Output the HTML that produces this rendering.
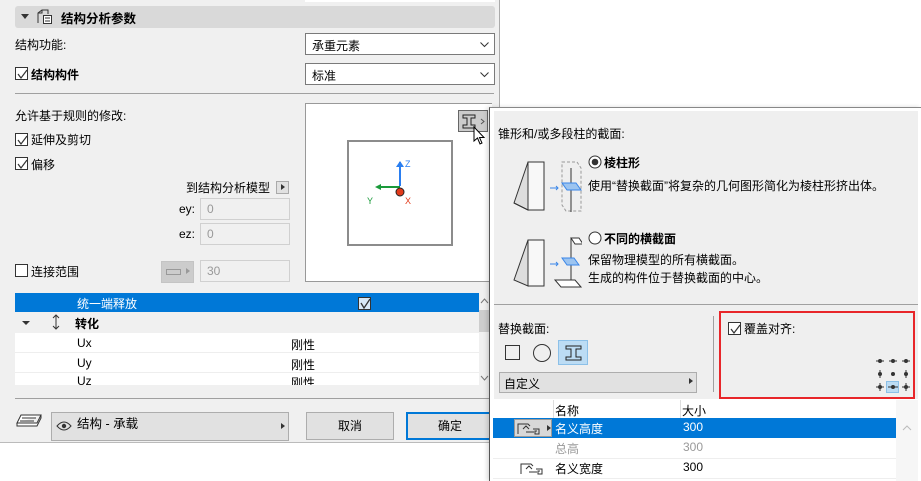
<!DOCTYPE html><html><head><meta charset="utf-8"><style>
*{box-sizing:border-box;margin:0;padding:0}
body{width:921px;height:481px;overflow:hidden;background:#fff;font-family:"Liberation Sans","Noto Sans CJK SC",sans-serif;font-size:12px;color:#000;position:relative}
.a{position:absolute}
.cb{position:absolute;width:13px;height:13px;border:1px solid #333;background:#fff}
.cb svg{position:absolute;left:1px;top:1px}
.sel{position:absolute;background:#fff;border:1px solid #7a7a7a;height:22px;padding:3px 6px;font-size:12px}
.inp{position:absolute;background:#f0f0f0;border:1px solid #d0d0d0;color:#999;padding:3px 6px;height:22px}
.btn{position:absolute;background:#e1e1e1;border:1px solid #adadad;text-align:center;line-height:26px;height:28px}
</style></head><body>
<div class="a" style="left:0;top:0;width:500px;height:443px;background:#f0f0f0;border-right:1px solid #aaa;border-bottom:1px solid #bbb"></div>
<div class="a" style="left:305px;top:0;width:190px;height:2px;background:#fff"></div>
<div class="a" style="left:15px;top:6px;width:480px;height:22px;background:#d9d9d9;border-radius:3px"></div>
<div class="a" style="left:21px;top:14px;border-left:4px solid transparent;border-right:4px solid transparent;border-top:5px solid #333"></div>
<svg class="a" style="left:36px;top:8px" width="18" height="17"><path d="M2 15V5l4-3h6v4M2 5h4V2" fill="none" stroke="#333"/><rect x="7.5" y="7.5" width="8" height="8" fill="#fff" stroke="#333"/><path d="M9 10h5M9 13h5" stroke="#333"/></svg>
<div class="a" style="left:61px;top:8px;font-weight:bold;font-size:12.5px">结构分析参数</div>
<div class="a" style="left:15px;top:36px">结构功能:</div>
<div class="sel" style="left:305px;top:33px;width:190px">承重元素<svg class="a" style="right:5px;top:8px" width="9" height="6"><path d="M0.5 0.5l4 4 4-4" fill="none" stroke="#333"/></svg></div>
<div class="cb" style="left:15px;top:67px"><svg width="11" height="11"><path d="M1 5l3 4 6-8" fill="none" stroke="#333" stroke-width="1.2"/></svg></div>
<div class="a" style="left:31px;top:66px;font-weight:bold">结构构件</div>
<div class="sel" style="left:305px;top:63px;width:190px">标准<svg class="a" style="right:5px;top:8px" width="9" height="6"><path d="M0.5 0.5l4 4 4-4" fill="none" stroke="#333"/></svg></div>
<div class="a" style="left:15px;top:93px;width:479px;height:1px;background:#a0a0a0"></div>
<div class="a" style="left:15px;top:107px">允许基于规则的修改:</div>
<div class="cb" style="left:15px;top:133px"><svg width="11" height="11"><path d="M1 5l3 4 6-8" fill="none" stroke="#333" stroke-width="1.2"/></svg></div>
<div class="a" style="left:31px;top:131px">延伸及剪切</div>
<div class="cb" style="left:15px;top:157px"><svg width="11" height="11"><path d="M1 5l3 4 6-8" fill="none" stroke="#333" stroke-width="1.2"/></svg></div>
<div class="a" style="left:31px;top:156px">偏移</div>
<div class="a" style="left:186px;top:179px">到结构分析模型</div>
<div class="a" style="left:276px;top:181px;width:13px;height:13px;border:1px solid #aaa;background:#e1e1e1"><div class="a" style="left:4px;top:2px;border-top:3.5px solid transparent;border-bottom:3.5px solid transparent;border-left:4px solid #333"></div></div>
<div class="a" style="left:179px;top:202px">ey:</div>
<div class="inp" style="left:200px;top:198px;width:90px">0</div>
<div class="a" style="left:179px;top:227px">ez:</div>
<div class="inp" style="left:200px;top:223px;width:90px">0</div>
<div class="cb" style="left:15px;top:264px"></div>
<div class="a" style="left:31px;top:263px">连接范围</div>
<div class="a" style="left:161px;top:261px;width:33px;height:22px;background:#ccc;border:1px solid #c4c4c4"><div class="a" style="left:4px;top:7px;width:15px;height:6px;border:1px solid #999"></div><div class="a" style="left:24px;top:6px;border-top:3.5px solid transparent;border-bottom:3.5px solid transparent;border-left:4px solid #999"></div></div>
<div class="inp" style="left:200px;top:260px;width:90px">30</div>
<div class="a" style="left:305px;top:103px;width:187px;height:179px;background:#fff;border:1px solid #999;border-right:none"></div>
<div class="a" style="left:347px;top:140px;width:106px;height:106px;border:2px solid #8c8c8c;background:#fff"></div>
<svg class="a" style="left:365px;top:158px" width="60" height="50"><path d="M35 4v24" stroke="#2a7ef0" stroke-width="2"/><path d="M31 9l4-6 4 6z" fill="#2a7ef0"/><path d="M35 29H13" stroke="#1a9a3a" stroke-width="2"/><path d="M10 29l6-3v6z" fill="#1a9a3a"/><circle cx="35" cy="34" r="4" fill="#e23a1a" stroke="#222" stroke-width="1"/><text x="40" y="9" font-size="9" fill="#2a7ef0" font-family="Liberation Sans">Z</text><text x="2" y="46" font-size="9" fill="#1a9a3a" font-family="Liberation Sans">Y</text><text x="40" y="46" font-size="9" fill="#e23a1a" font-family="Liberation Sans">X</text></svg>
<div class="a" style="left:458px;top:110px;width:30px;height:22px;background:#ccc;border:1px solid #666"><svg class="a" style="left:3px;top:3px" width="24" height="15"><path d="M1 1h12v3H9v7h4v3H1v-3h4V4H1z" fill="none" stroke="#222"/><path d="M19 5l3 2.5-3 2.5" fill="none" stroke="#555"/></svg></div>
<svg class="a" style="left:473px;top:126px" width="14" height="20"><path d="M1 1v14l3.5-3 2.5 6 2-1-2.5-5.5H11z" fill="#fff" stroke="#000"/></svg>
<div class="a" style="left:15px;top:293px;width:464px;height:92px;background:#fff"></div>
<div class="a" style="left:15px;top:293px;width:464px;height:19px;background:#0078d7"></div>
<div class="a" style="left:77px;top:295px;color:#fff">统一端释放</div>
<div class="a" style="left:358px;top:297px;width:13px;height:13px;border:1px solid #333;background:#d8e8f6"><svg class="a" style="left:1px;top:0" width="11" height="11"><path d="M1 5l3 5 6-9" fill="none" stroke="#333" stroke-width="1.3"/></svg></div>
<div class="a" style="left:15px;top:312px;width:464px;height:21px;background:#f0f0f0"></div>
<div class="a" style="left:22px;top:321px;border-left:4px solid transparent;border-right:4px solid transparent;border-top:4px solid #333"></div>
<svg class="a" style="left:52px;top:314px" width="8" height="16"><path d="M4 1v14M1 4l3-3 3 3M1 12l3 3 3-3" fill="none" stroke="#333"/></svg>
<div class="a" style="left:75px;top:315px;font-weight:bold">转化</div>
<div class="a" style="left:15px;top:352px;width:464px;height:1px;background:#eee"></div>
<div class="a" style="left:15px;top:372px;width:464px;height:1px;background:#eee"></div>
<div class="a" style="left:77px;top:336px">Ux</div><div class="a" style="left:291px;top:336px">刚性</div>
<div class="a" style="left:77px;top:356px">Uy</div><div class="a" style="left:291px;top:356px">刚性</div>
<div class="a" style="left:15px;top:373px;width:464px;height:12px;overflow:hidden"><div class="a" style="left:62px;top:1px">Uz</div><div class="a" style="left:276px;top:1px">刚性</div></div>
<div class="a" style="left:479px;top:310px;width:11px;height:22px;background:#cdcdcd"></div>
<svg class="a" style="left:480px;top:298px" width="9" height="6"><path d="M1 5l3.5-4 3.5 4" fill="none" stroke="#777"/></svg>
<svg class="a" style="left:480px;top:375px" width="9" height="6"><path d="M1 1l3.5 4 3.5-4" fill="none" stroke="#777"/></svg>
<div class="a" style="left:15px;top:398px;width:476px;height:1px;background:#a0a0a0"></div>
<svg class="a" style="left:16px;top:413px" width="28" height="16"><path d="M5 2h20l-4 8H1z M1 10v3h20l4-8v-3" fill="#fff" stroke="#333"/><path d="M6 5h14M4 8h14" stroke="#333"/></svg>
<div class="a" style="left:51px;top:412px;width:238px;height:29px;background:#e1e1e1;border:1px solid #adadad"></div>
<svg class="a" style="left:56px;top:421px" width="16" height="10"><path d="M1 5q7-8 14 0q-7 8-14 0z" fill="none" stroke="#333"/><circle cx="8" cy="5" r="2.2" fill="#333"/></svg>
<div class="a" style="left:77px;top:413px;font-size:12.5px">结构 - 承载</div>
<div class="a" style="left:281px;top:423px;border-top:3.5px solid transparent;border-bottom:3.5px solid transparent;border-left:4px solid #333"></div>
<div class="btn" style="left:306px;top:412px;width:88px">取消</div>
<div class="btn" style="left:406px;top:412px;width:88px;border:2px solid #0078d7;line-height:24px">确定</div>
<div class="a" style="left:489px;top:107px;width:432px;height:374px;background:#fff;border-left:1px solid #555;border-top:1px solid #888;box-shadow:-2px 0 4px rgba(0,0,0,.15)"></div>
<div class="a" style="left:494px;top:111px;width:424px;height:288px;background:#efefef"></div>
<div class="a" style="left:498px;top:125px">锥形和/或多段柱的截面:</div>
<svg class="a" style="left:502px;top:158px" width="80" height="155"><path d="M26 4h16v48H26z" fill="#f8f8f8" stroke="#333"/><path d="M12 45l14-41v48z" fill="#ddd" stroke="#333"/><path d="M12 45l14 7" stroke="#333"/><path d="M48 30h8M54 28l2 2-2 2" stroke="#3a86e8" fill="none"/><path d="M60 4h15l4 6v43h-15l-4-6z" fill="none" stroke="#999" stroke-dasharray="3 2"/><path d="M69 10v44" stroke="#333"/><path d="M60 25h14l5 7h-14z" fill="#9cc4f0" stroke="#3a86e8"/><path d="M26 82h16v46H26z" fill="#f8f8f8" stroke="#333"/><path d="M12 122l14-40v46z" fill="#ddd" stroke="#333"/><path d="M48 106h8M54 104l2 2-2 2" stroke="#3a86e8" fill="none"/><path d="M69 80h8l4 6v42h-10l-6-6" fill="none" stroke="#888" stroke-dasharray="3 2"/><path d="M69 80v42" stroke="#333"/><path d="M69 80h8l4 6h-8z" fill="#fff" stroke="#333"/><path d="M60 100h12l5 7h-12z" fill="#9cc4f0" stroke="#3a86e8"/><path d="M53 122h20l6 7h-20z" fill="#fff" stroke="#333"/></svg>
<svg class="a" style="left:588px;top:155px" width="14" height="14"><circle cx="7" cy="7" r="6" fill="#fff" stroke="#333"/><circle cx="7" cy="7" r="3.3" fill="#333"/></svg>
<div class="a" style="left:604px;top:154px;font-weight:bold">棱柱形</div>
<div class="a" style="left:588px;top:177px">使用“替换截面”将复杂的几何图形简化为棱柱形挤出体。</div>
<svg class="a" style="left:588px;top:231px" width="14" height="14"><circle cx="7" cy="7" r="6" fill="#fff" stroke="#333"/></svg>
<div class="a" style="left:604px;top:230px;font-weight:bold">不同的横截面</div>
<div class="a" style="left:588px;top:251px">保留物理模型的所有横截面。</div>
<div class="a" style="left:588px;top:269px">生成的构件位于替换截面的中心。</div>
<div class="a" style="left:494px;top:304px;width:424px;height:1px;background:#a0a0a0"></div>
<div class="a" style="left:498px;top:320px">替换截面:</div>
<div class="a" style="left:505px;top:345px;width:15px;height:15px;border:1px solid #333"></div>
<div class="a" style="left:533px;top:344px;width:18px;height:18px;border:1px solid #333;border-radius:50%"></div>
<div class="a" style="left:558px;top:340px;width:30px;height:25px;background:#bcdcf4;border:1px solid #8cc0e8"><svg class="a" style="left:6px;top:4px" width="17" height="16"><path d="M1 1h15v3h-5v8h5v3H1v-3h5V4H1z" fill="none" stroke="#222"/></svg></div>
<div class="a" style="left:499px;top:372px;width:198px;height:21px;background:#e1e1e1;border:1px solid #adadad;padding:2px 4px">自定义</div>
<div class="a" style="left:689px;top:378px;border-top:3.5px solid transparent;border-bottom:3.5px solid transparent;border-left:4px solid #333"></div>
<div class="a" style="left:713px;top:316px;width:1px;height:76px;background:#a0a0a0"></div>
<div class="a" style="left:719px;top:311px;width:196px;height:88px;border:2px solid #e8262a"></div>
<div class="cb" style="left:728px;top:322px"><svg width="11" height="11"><path d="M1 5l3 4 6-8" fill="none" stroke="#333" stroke-width="1.2"/></svg></div>
<div class="a" style="left:744px;top:320px">覆盖对齐:</div>
<div class="a" style="left:886px;top:381px;width:13px;height:12px;background:#bcdcf4;border:1px solid #8cc0e8"></div>
<svg class="a" style="left:875px;top:358px" width="36" height="36"><g fill="#333"><circle cx="5" cy="3" r="2"/><circle cx="18" cy="3" r="2"/><circle cx="31" cy="3" r="2"/><circle cx="5" cy="16" r="2"/><circle cx="18" cy="16" r="2"/><circle cx="31" cy="16" r="2"/><circle cx="5" cy="29" r="2"/><circle cx="18" cy="29" r="2"/><circle cx="31" cy="29" r="2"/></g><path d="M1 3h8M14 3h8M27 3h8M5 12v8M31 12v8M1 29h8M13 29h10M27 29h8M5 25v8M31 25v8" stroke="#333"/></svg>
<div class="a" style="left:553px;top:400px;width:1px;height:18px;background:#ddd"></div>
<div class="a" style="left:680px;top:400px;width:1px;height:18px;background:#ddd"></div>
<div class="a" style="left:555px;top:402px">名称</div><div class="a" style="left:682px;top:402px">大小</div>
<div class="a" style="left:493px;top:418px;width:403px;height:20px;background:#0078d7"></div>
<div class="a" style="left:514px;top:419px;width:38px;height:18px;background:#d8d8d8;border:1px solid #999"></div>
<svg class="a" style="left:516px;top:421px" width="36" height="14"><path d="M2 13V3h10l2 2M7 8l3-3 3 3M10 11h8M17 8h6v5h-4v-3h2" fill="none" stroke="#333"/><path d="M31 4l4 3-4 3z" fill="#333"/></svg>
<div class="a" style="left:555px;top:420px;color:#fff">名义高度</div><div class="a" style="left:683px;top:420px;color:#fff">300</div>
<div class="a" style="left:555px;top:440px;color:#999">总高</div><div class="a" style="left:683px;top:440px;color:#999">300</div>
<div class="a" style="left:493px;top:458px;width:403px;height:1px;background:#eee"></div>
<svg class="a" style="left:519px;top:461px" width="30" height="14"><path d="M2 13V3h10l2 2M7 8l3-3 3 3M10 11h8M17 8h6v5h-4v-3h2" fill="none" stroke="#333"/></svg>
<div class="a" style="left:555px;top:460px">名义宽度</div><div class="a" style="left:683px;top:460px">300</div>
<div class="a" style="left:493px;top:478px;width:403px;height:1px;background:#eee"></div>
<div class="a" style="left:896px;top:400px;width:22px;height:81px;background:#f6f6f6"></div>
<svg class="a" style="left:902px;top:425px" width="10" height="6"><path d="M1 5l4-4 4 4" fill="none" stroke="#bbb"/></svg>
<div class="a" style="left:918px;top:108px;width:3px;height:373px;background:#fff"></div>
</body></html>
